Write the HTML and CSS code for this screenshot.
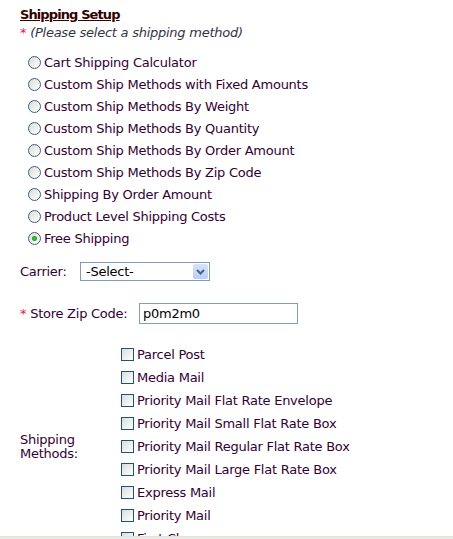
FILE: index.html
```html
<!DOCTYPE html>
<html lang="en">
<head>
    <meta charset="UTF-8">
    <title>Shipping Setup</title>
    <link rel="stylesheet" href="styles.css">
</head>
<body>

    <div class="setup">
        <h2 class="title">Shipping Setup</h2>
        <div class="note"><span class="req">*</span> (Please select a shipping method)</div>

        <ul class="methods">
            <li><label><input type="radio" name="method"> Cart Shipping Calculator</label></li>
            <li><label><input type="radio" name="method"> Custom Ship Methods with Fixed Amounts</label></li>
            <li><label><input type="radio" name="method"> Custom Ship Methods By Weight</label></li>
            <li><label><input type="radio" name="method"> Custom Ship Methods By Quantity</label></li>
            <li><label><input type="radio" name="method"> Custom Ship Methods By Order Amount</label></li>
            <li><label><input type="radio" name="method"> Custom Ship Methods By Zip Code</label></li>
            <li><label><input type="radio" name="method"> Shipping By Order Amount</label></li>
            <li><label><input type="radio" name="method"> Product Level Shipping Costs</label></li>
            <li><label><input type="radio" name="method" checked> Free Shipping</label></li>
        </ul>

        <div class="field carrier">
            <label for="carrier" class="field-label">Carrier:</label>
            <div class="select-wrap">
                <select id="carrier">
                    <option>-Select-</option>
                    <option>USPS</option>
                    <option>UPS</option>
                    <option>FedEx</option>
                </select>
                <span class="select-btn">
                    <svg width="9" height="6" viewBox="0 0 9 6"><path d="M1 1 L4.5 4.5 L8 1" fill="none" stroke="#4d6185" stroke-width="2"/></svg>
                </span>
            </div>
        </div>

        <div class="field zip">
            <label for="zip" class="field-label"><span class="req">*</span> Store Zip Code:</label>
            <input type="text" id="zip" value="p0m2m0">
        </div>

        <div class="services">
            <div class="services-label">Shipping<br>Methods:</div>
            <ul class="service-list">
                <li><label><input type="checkbox"> Parcel Post</label></li>
                <li><label><input type="checkbox"> Media Mail</label></li>
                <li><label><input type="checkbox"> Priority Mail Flat Rate Envelope</label></li>
                <li><label><input type="checkbox"> Priority Mail Small Flat Rate Box</label></li>
                <li><label><input type="checkbox"> Priority Mail Regular Flat Rate Box</label></li>
                <li><label><input type="checkbox"> Priority Mail Large Flat Rate Box</label></li>
                <li><label><input type="checkbox"> Express Mail</label></li>
                <li><label><input type="checkbox"> Priority Mail</label></li>
                <li><label><input type="checkbox"> First Class</label></li>
            </ul>
        </div>
    </div>

    <div class="scroll-edge"></div>

</body>
</html>
```

FILE: styles.css
```css
body {
    margin: 0;
    background-color: #ffffff;
    font-family: "DejaVu Sans", Verdana, sans-serif;
    font-size: 13px;
    letter-spacing: -0.25px;
    color: #330033;
    overflow: hidden;
}

.setup {
    padding: 7px 20px 0 20px;
}

.title {
    margin: 0;
    font-size: 13px;
    line-height: 16px;
    font-weight: bold;
    letter-spacing: -0.9px;
    text-decoration: underline;
    color: #330000;
}

.note {
    margin-top: 2px;
    line-height: 16px;
    font-style: italic;
    color: #333344;
}

.req {
    color: #e0204a;
    font-style: normal;
}

ul {
    list-style: none;
    margin: 0;
    padding: 0;
}

.methods {
    margin-top: 10px;
    padding-left: 8px;
}

.methods li {
    height: 22px;
    display: flex;
    align-items: center;
}

label {
    display: flex;
    align-items: center;
    gap: 3px;
}

/* xp style radio */
input[type="radio"] {
    appearance: none;
    margin: 0;
    width: 13px;
    height: 13px;
    border: 1px solid #3c5f84;
    border-radius: 50%;
    background: linear-gradient(135deg, #dcdcd4, #ffffff);
    box-sizing: border-box;
}

input[type="radio"]:checked {
    background: radial-gradient(circle, #4fd34f 0, #21a121 2px, transparent 3px), linear-gradient(135deg, #dcdcd4, #ffffff);
}

/* xp style checkbox */
input[type="checkbox"] {
    appearance: none;
    margin: 0;
    width: 13px;
    height: 13px;
    border: 1px solid #1c5180;
    background: linear-gradient(135deg, #dcdcd7, #ffffff);
    box-sizing: border-box;
}

.field {
    display: flex;
    align-items: center;
}

.field-label {
    display: block;
}

.carrier {
    margin-top: 13px;
}

.carrier .field-label {
    width: 60px;
}

.select-wrap {
    position: relative;
}

select {
    appearance: none;
    width: 130px;
    height: 19px;
    padding: 0 0 0 5px;
    border: 1px solid #7f9db9;
    border-radius: 0;
    background: #ffffff;
    font-family: inherit;
    font-size: 13px;
    letter-spacing: inherit;
    color: #000000;
    display: block;
}

.select-btn {
    position: absolute;
    top: 2px;
    right: 2px;
    width: 15px;
    height: 15px;
    background: linear-gradient(#d6e3fe, #b9cdf7);
    border-radius: 2px;
    display: flex;
    align-items: center;
    justify-content: center;
    pointer-events: none;
}

.zip {
    margin-top: 22px;
}

.zip .field-label {
    width: 119px;
}

input[type="text"] {
    width: 159px;
    height: 21px;
    padding: 0 3px;
    border: 1px solid #7f9db9;
    box-sizing: border-box;
    font-family: inherit;
    font-size: 13px;
    letter-spacing: inherit;
    color: #000000;
}

.services {
    display: flex;
    align-items: center;
    margin-top: 19px;
}

.services-label {
    width: 101px;
    line-height: 14px;
}

.service-list li {
    height: 23px;
    display: flex;
    align-items: center;
}

.scroll-edge {
    position: fixed;
    left: 0;
    right: 0;
    bottom: 0;
    height: 2px;
    background: #ece9e2;
    border-top: 1px solid #e4e2dc;
}
```
